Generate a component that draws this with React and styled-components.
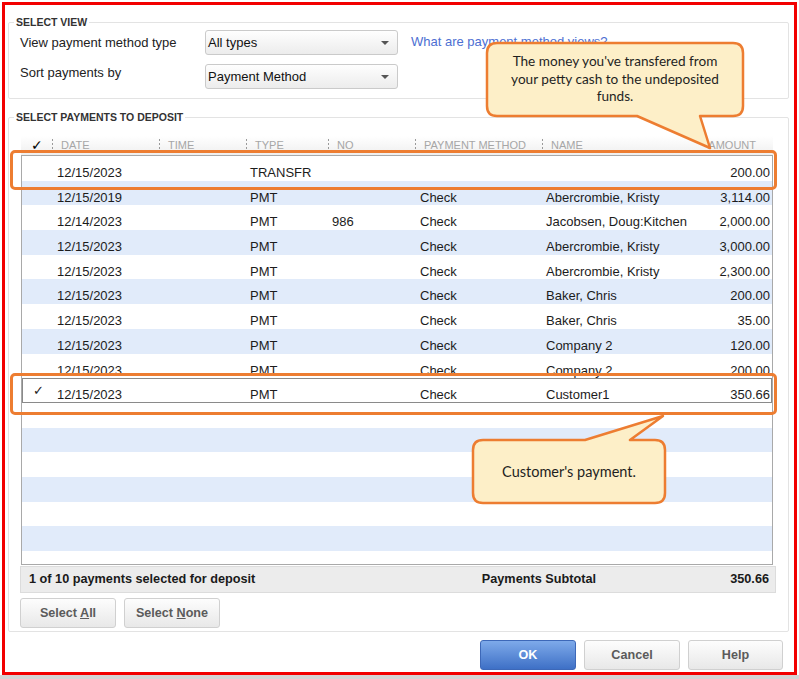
import React from "react";
import styled, { createGlobalStyle } from "styled-components";

const GlobalStyle = createGlobalStyle`
  html, body { margin: 0; padding: 0; background: #fff; }
  body { font-family: "Liberation Sans", Arial, sans-serif; }
`;

const COLS = "31px 107px 87px 82px 87px 127px 157px 1fr";

const Page = styled.div`
  width: 799px;
  height: 679px;
  overflow: hidden;
  background: linear-gradient(to bottom, #fff 0, #fff 675px, #d4d4d4 675px);
`;

const Frame = styled.div`
  position: relative;
  box-sizing: border-box;
  width: 795px;
  height: 673px;
  margin: 2px 0 0 2px;
  border: 3px solid #f20000;
  background: #fff;
  padding: 17px 5px 0 3px;
  display: flex;
  flex-direction: column;
`;

const Group = styled.div`
  position: relative;
  border: 1px solid #e3e3e3;
  border-radius: 2px;
`;

const GroupTitle = styled.span`
  position: absolute;
  top: -7px;
  left: 5px;
  padding: 0 2px;
  background: #fff;
  font: bold 10.5px/12px "Liberation Sans", Arial, sans-serif;
  color: #333;
`;

const ViewGroup = styled(Group)`
  display: grid;
  grid-template-columns: 185px 193px auto;
  row-gap: 9px;
  align-items: center;
  padding: 7px 0 9px 11px;
`;

const Label = styled.div`
  font-size: 13px;
  color: #222;
  margin-bottom: ${(p) => (p.$raise ? "9px" : "0")};
`;

const Select = styled.div`
  box-sizing: border-box;
  height: 25px;
  border: 1px solid #cacaca;
  border-radius: 3px;
  background: linear-gradient(#fefefe, #ececec);
  display: flex;
  align-items: center;
  justify-content: space-between;
  padding: 0 8px 0 2px;
  font-size: 13px;
  color: #111;
`;

const Arrow = styled.span`
  width: 0;
  height: 0;
  border-left: 4px solid transparent;
  border-right: 4px solid transparent;
  border-top: 4px solid #555;
`;

const HelpLink = styled.a`
  margin-left: 13px;
  font-size: 13px;
  color: #4d6fd2;
  text-decoration: none;
  margin-top: -2px;
`;

const DepositGroup = styled(Group)`
  margin-top: 18px;
  display: flex;
  flex-direction: column;
  padding: 18px 15px 3px 12px;
`;

const Header = styled.div`
  display: grid;
  grid-template-columns: ${COLS};
  height: 19px;
  padding: 0 1px;
  background: linear-gradient(#ffffff, #efefef);
`;

const HeaderCell = styled.div`
  position: relative;
  font-size: 11px;
  line-height: 19px;
  color: #a6a6a6;
  text-transform: uppercase;
  padding-left: 8px;
  white-space: nowrap;
  text-align: ${(p) => (p.$right ? "right" : "left")};
  padding-right: ${(p) => (p.$right ? "16px" : "0")};
  &::before {
    content: "";
    display: ${(p) => (p.$sep ? "block" : "none")};
    position: absolute;
    left: -1px;
    top: 3px;
    width: 1px;
    height: 12px;
    background: repeating-linear-gradient(#9a9a9a 0 2px, transparent 2px 4px);
  }
`;

const HeaderCheck = styled.div`
  font: bold 14px/19px "DejaVu Sans", sans-serif;
  color: #000;
  padding-left: 9px;
`;

const Body = styled.div`
  box-sizing: border-box;
  height: 410px;
  border: 1px solid #a9a9a9;
  overflow: hidden;
  background: #fff;
`;

const Row = styled.div`
  box-sizing: border-box;
  display: grid;
  grid-template-columns: ${COLS};
  height: 24.7px;
  padding-top: 10px;
  font-size: 13px;
  line-height: 14px;
  color: #1c1c1c;
  background: ${(p) => (p.$alt && !p.$selected ? "#e1ebfa" : "#fff")};
  outline: ${(p) => (p.$selected ? "1px solid #8a8a8a" : "none")};
  outline-offset: -1px;
`;

const Cell = styled.div`
  padding-left: ${(p) => (p.$pad ? p.$pad : "3px")};
  white-space: nowrap;
  overflow: hidden;
  text-align: ${(p) => (p.$right ? "right" : "left")};
  padding-right: ${(p) => (p.$right ? "2px" : "0")};
`;

const CheckCell = styled.div`
  font: 13px/14px "DejaVu Sans", sans-serif;
  color: #222;
  padding-left: 11px;
  margin-top: -4px;
`;

const Summary = styled.div`
  box-sizing: border-box;
  height: 27px;
  margin: 1px -3px 0 -1px;
  border: 1px solid #dcdcdc;
  background: #ececec;
  display: grid;
  grid-template-columns: 1fr auto 173px;
  align-items: center;
  padding: 0 6px 2px 8px;
  font-weight: bold;
  font-size: 12.7px;
  color: #1a1a1a;
`;

const Amount = styled.span`
  text-align: right;
`;

const ButtonRow = styled.div`
  display: flex;
  gap: 8px;
  margin: 5px 0 0 -1px;
`;

const Button = styled.button`
  box-sizing: border-box;
  width: ${(p) => p.$w || "96px"};
  height: 30px;
  border: 1px solid ${(p) => (p.$primary ? "#3d68b8" : "#d0d0d0")};
  border-radius: 3px;
  background: ${(p) =>
    p.$primary
      ? "linear-gradient(#7eaaea, #3e70c6)"
      : "linear-gradient(#fdfdfd, #e8e8e8)"};
  font: bold 12.6px "Liberation Sans", Arial, sans-serif;
  color: ${(p) => (p.$primary ? "#fff" : "#5b5b5b")};
  padding: 0;
  u { text-decoration: underline; }
`;

const Footer = styled.div`
  display: flex;
  justify-content: flex-end;
  gap: 8px;
  margin-top: 8px;
  padding-right: 6px;
`;

const Highlight = styled.div`
  position: absolute;
  box-sizing: border-box;
  left: 5px;
  width: 767px;
  top: ${(p) => p.$top}px;
  height: ${(p) => p.$h}px;
  border: 3px solid #ed7d31;
  border-radius: 5px;
`;

const Callout = styled.div`
  position: absolute;
  left: ${(p) => p.$x}px;
  top: ${(p) => p.$y}px;
  width: ${(p) => p.$w}px;
  height: ${(p) => p.$h}px;
  svg { position: absolute; inset: 0; }
`;

const CalloutText = styled.div`
  position: absolute;
  left: ${(p) => p.$x}px;
  top: ${(p) => p.$y}px;
  width: ${(p) => p.$w}px;
  height: ${(p) => p.$h}px;
  display: flex;
  align-items: center;
  justify-content: center;
  text-align: center;
  font-family: Lato, "Open Sans", sans-serif;
  font-size: ${(p) => p.$fs}px;
  line-height: 17.5px;
  color: #1f1f1f;
`;

const rows = [
  ["", "12/15/2023", "", "TRANSFR", "", "", "", "200.00"],
  ["", "12/15/2019", "", "PMT", "", "Check", "Abercrombie, Kristy", "3,114.00"],
  ["", "12/14/2023", "", "PMT", "986", "Check", "Jacobsen, Doug:Kitchen", "2,000.00"],
  ["", "12/15/2023", "", "PMT", "", "Check", "Abercrombie, Kristy", "3,000.00"],
  ["", "12/15/2023", "", "PMT", "", "Check", "Abercrombie, Kristy", "2,300.00"],
  ["", "12/15/2023", "", "PMT", "", "Check", "Baker, Chris", "200.00"],
  ["", "12/15/2023", "", "PMT", "", "Check", "Baker, Chris", "35.00"],
  ["", "12/15/2023", "", "PMT", "", "Check", "Company 2", "120.00"],
  ["", "12/15/2023", "", "PMT", "", "Check", "Company 2", "200.00"],
  ["✓", "12/15/2023", "", "PMT", "", "Check", "Customer1", "350.66"],
];
while (rows.length < 17) rows.push(["", "", "", "", "", "", "", ""]);

export default function App() {
  return (
    <Page>
      <GlobalStyle />
      <Frame>
        <ViewGroup>
          <GroupTitle>SELECT VIEW</GroupTitle>
          <Label>View payment method type</Label>
          <Select>
            All types
            <Arrow />
          </Select>
          <HelpLink>What are payment method views?</HelpLink>
          <Label $raise>Sort payments by</Label>
          <Select>
            Payment Method
            <Arrow />
          </Select>
          <span />
        </ViewGroup>

        <DepositGroup>
          <GroupTitle>SELECT PAYMENTS TO DEPOSIT</GroupTitle>
          <Header>
            <HeaderCheck>✓</HeaderCheck>
            <HeaderCell $sep>Date</HeaderCell>
            <HeaderCell $sep>Time</HeaderCell>
            <HeaderCell $sep>Type</HeaderCell>
            <HeaderCell $sep>No</HeaderCell>
            <HeaderCell $sep>Payment Method</HeaderCell>
            <HeaderCell $sep>Name</HeaderCell>
            <HeaderCell $right>Amount</HeaderCell>
          </Header>
          <Body>
            {rows.map((r, i) => (
              <Row key={i} $alt={i % 2 === 1} $selected={i === 9}>
                <CheckCell>{r[0]}</CheckCell>
                <Cell $pad="4px">{r[1]}</Cell>
                <Cell>{r[2]}</Cell>
                <Cell>{r[3]}</Cell>
                <Cell>{r[4]}</Cell>
                <Cell $pad="4px">{r[5]}</Cell>
                <Cell>{r[6]}</Cell>
                <Cell $right>{r[7]}</Cell>
              </Row>
            ))}
          </Body>
          <Summary>
            <span>1 of 10 payments selected for deposit</span>
            <span>Payments Subtotal</span>
            <Amount>350.66</Amount>
          </Summary>
          <ButtonRow>
            <Button $w="96px">
              Select <u>A</u>ll
            </Button>
            <Button $w="96px">
              Select <u>N</u>one
            </Button>
          </ButtonRow>
        </DepositGroup>

        <Footer>
          <Button $primary>OK</Button>
          <Button>Cancel</Button>
          <Button $w="95px">Help</Button>
        </Footer>

        <Highlight $top={145} $h={40} />
        <Highlight $top={368} $h={42} />

        <Callout $x={480} $y={36} $w={262} $h={110}>
          <svg width="262" height="110" viewBox="0 0 262 110">
            <path
              d="M12 2 H248 Q258 2 258 12 V65 Q258 75 248 75 H215 L225 107 L152 75 H12 Q2 75 2 65 V12 Q2 2 12 2 Z"
              fill="#fdefc8"
              stroke="#ed7d31"
              strokeWidth="2.5"
              strokeLinejoin="round"
            />
          </svg>
          <CalloutText $x={2} $y={2} $w={256} $h={73} $fs={13.6}>
            The money you've transfered from
            <br />
            your petty cash to the undeposited
            <br />
            funds.
          </CalloutText>
        </Callout>

        <Callout $x={466} $y={409} $w={198} $h={92}>
          <svg width="198" height="92" viewBox="0 0 198 92">
            <path
              d="M12 26 H114 L192 2 L159 26 H184 Q194 26 194 36 V79 Q194 89 184 89 H12 Q2 89 2 79 V36 Q2 26 12 26 Z"
              fill="#fdefc8"
              stroke="#ed7d31"
              strokeWidth="2.5"
              strokeLinejoin="round"
            />
          </svg>
          <CalloutText $x={2} $y={26} $w={192} $h={63} $fs={14.5}>
            Customer's payment.
          </CalloutText>
        </Callout>
      </Frame>
    </Page>
  );
}
